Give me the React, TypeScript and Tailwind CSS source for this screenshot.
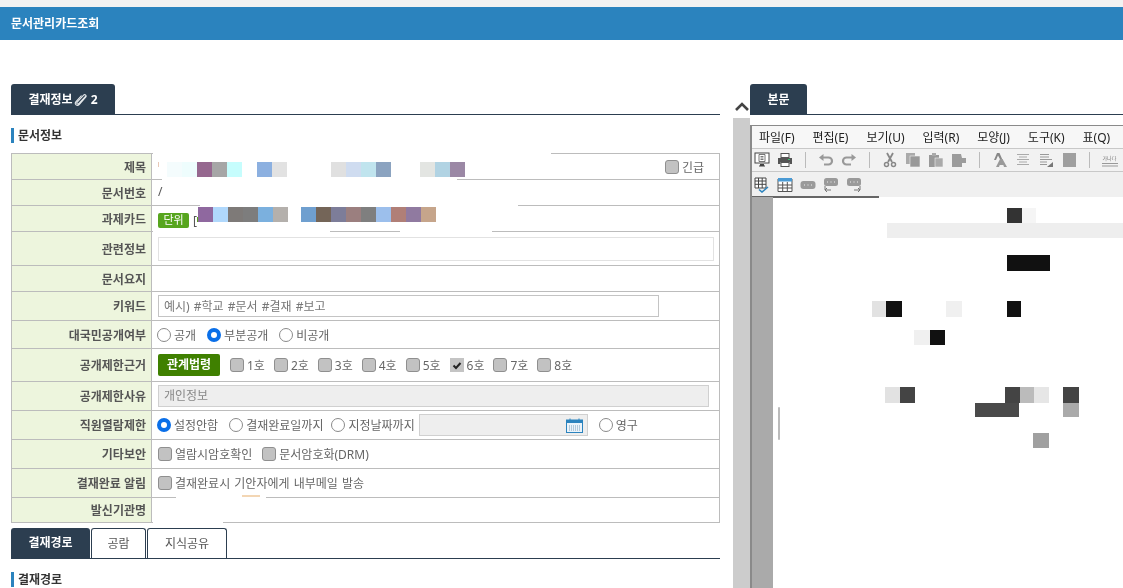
import type { ReactNode } from 'react';

const font = { fontFamily: '"Noto Sans", "Noto Sans CJK KR", sans-serif' };

// 가려진 부분 (모자이크)
const Block = ({ c, w = 'w-[15px]' }: { c: string; w?: string }) => <span className={`block h-full shrink-0 ${w} ${c}`} />;

const Mosaic = ({ className, colors }: { className: string; colors: string[] }) => (
  <div className={`absolute flex blur-[0.5px] ${className}`}>
    {colors.map((c, i) => (
      <Block key={i} c={c} />
    ))}
  </div>
);

const Radio = ({ on }: { on?: boolean }) =>
  on ? (
    <span className="block w-[14px] h-[14px] shrink-0 rounded-full border-[4px] border-[#0a6fe8] bg-white" />
  ) : (
    <span className="block w-[14px] h-[14px] shrink-0 rounded-full border border-[#8a8a8a] bg-white" />
  );

const RadioItem = ({ on, label, className = '' }: { on?: boolean; label: string; className?: string }) => (
  <span className={`flex items-center gap-[3px] ${className}`}>
    <Radio on={on} />
    <span className="pt-[2px]">{label}</span>
  </span>
);

const Check = ({ on, label, className = '' }: { on?: boolean; label: string; className?: string }) => (
  <span className={`flex items-center gap-[3px] ${className}`}>
    {on ? (
      <span className="flex items-center justify-center w-[14px] h-[14px] bg-[#c4c4c4]">
        <svg width="10" height="9" viewBox="0 0 10 9">
          <path d="M1.5 4.5 L4 7 L8.5 2" stroke="#222" strokeWidth="2" fill="none" />
        </svg>
      </span>
    ) : (
      <span className="block w-[14px] h-[14px] rounded-[3px] border border-[#8f8f8f] bg-[#c2c2c2]" />
    )}
    <span className="pt-[2px]">{label}</span>
  </span>
);

const Row = ({ label, h, children, last }: { label: string; h: string; children?: ReactNode; last?: boolean }) => (
  <div className={`flex ${h} ${last ? '' : 'border-b border-[#bcbcbc]'}`}>
    <div className="w-[140px] shrink-0 border-r border-[#bcbcbc] bg-[#edf5dd] flex items-center justify-end pr-[5px] pt-[2px] font-bold text-[#555]">
      {label}
    </div>
    <div className="flex-1 flex items-center pl-[6px] text-[#666] relative">{children}</div>
  </div>
);

const Heading = ({ text, className = '' }: { text: string; className?: string }) => (
  <div className={`flex items-center gap-[4px] h-[15px] ${className}`}>
    <span className="block w-[3px] h-[15px] bg-[#2b83be]" />
    <span className="text-[12px] font-bold text-[#333]">{text}</span>
  </div>
);

const Sep = () => <span className="block w-px h-[16px] bg-[#bbb] mx-[5px]" />;

const Tool = ({ children }: { children: ReactNode }) => (
  <svg width="16" height="16" viewBox="0 0 16 16" className="shrink-0">
    {children}
  </svg>
);

const numbers = ['1호', '2호', '3호', '4호', '5호', '6호', '7호', '8호'];
const menus = ['파일(F)', '편집(E)', '보기(U)', '입력(R)', '모양(J)', '도구(K)', '표(Q)'];

export default function App() {
  return (
    <div className="w-[1123px] h-[588px] overflow-hidden bg-white text-[12px] relative blur-[0.3px]" style={font}>
      <div className="h-[7px] bg-[#f2f2f2]" />
      <div className="h-[33px] bg-[#2b83be] flex items-center pl-[11px] text-[12px] font-bold text-white">문서관리카드조회</div>

      <div className="flex pt-[44px]">
        {/* 왼쪽 */}
        <div className="w-[709px] ml-[11px] shrink-0">
          <div className="h-[31px] border-b border-[#2c3e50]">
            <div className="w-[104px] h-[30px] pt-[2px] bg-[#2c3e50] rounded-t-[3px] flex items-center justify-center gap-px text-white font-bold">
              <span>결재정보</span>
              <svg width="14" height="14" viewBox="0 0 14 14" fill="none" stroke="#e4e7ea" strokeWidth="1.1">
                <path d="M12 3 L5 10.5 C3.8 11.8 2 10.6 3.2 9 L9.6 2.2 C11 0.9 13 2.6 11.7 4.2 L5.2 11.6 C3 13.8 0 11 2 8.7 L7.5 2.5" />
              </svg>
              <span className="ml-[2px]">2</span>
            </div>
          </div>
          <Heading text="문서정보" className="mt-[13px]" />

          <div className="mt-[10px] border border-[#bcbcbc] relative">
            <Row label="제목" h="h-[26px]">
              <span className="block w-px h-[5px] bg-[#e8c9b8] -mt-[5px]" />
              <span className="ml-auto mr-[15px] flex items-center">
                <Check label="긴급" />
              </span>
            </Row>
            <Row label="문서번호" h="h-[26px]">
              <span className="text-[#555] -mt-[2px]">/</span>
            </Row>
            <Row label="과제카드" h="h-[26px]">
              <span className="mt-[4px] h-[15px] w-[31px] rounded-[2px] bg-[#57a51e] text-white text-[11px] flex items-center justify-center">단위</span>
              <span className="ml-[4px] mt-[4px] text-[#555]">[</span>
              <span className="mt-[2px] block w-[2px] h-[5px] bg-[#57a51e]" />
            </Row>
            <Row label="관련정보" h="h-[34px]">
              <div className="w-[556px] h-[24px] border border-[#e2e2e2] bg-white" />
            </Row>
            <Row label="문서요지" h="h-[26px]" />
            <Row label="키워드" h="h-[29px]">
              <div className="w-[501px] h-[22px] border border-[#c4c4c4] bg-white flex items-center pl-[5px] pt-[2px] text-[#777] [word-spacing:1px]">예시) #학교 #문서 #결재 #보고</div>
            </Row>
            <Row label="대국민공개여부" h="h-[28px]">
              <RadioItem label="공개" className="-ml-px" />
              <RadioItem on label="부분공개" className="ml-[11px]" />
              <RadioItem label="비공개" className="ml-[11px]" />
            </Row>
            <Row label="공개제한근거" h="h-[33px]">
              <span className="w-[62px] h-[22px] rounded-[2px] bg-[#3f8000] text-white font-bold flex items-center justify-center">관계법령</span>
              <span className="flex gap-[9px] ml-[10px]">
                {numbers.map((n) => (
                  <Check key={n} label={n} on={n === '6호'} />
                ))}
              </span>
            </Row>
            <Row label="공개제한사유" h="h-[29px]">
              <div className="w-[551px] h-[22px] border border-[#d0d0d0] bg-[#eeeeee] flex items-center pl-[5px] text-[#888]">개인정보</div>
            </Row>
            <Row label="직원열람제한" h="h-[29px]">
              <RadioItem on label="설정안함" className="-ml-px" />
              <RadioItem label="결재완료일까지" className="ml-[11px]" />
              <RadioItem label="지정날짜까지" className="ml-[8px]" />
              <div className="ml-[4px] w-[169px] h-[22px] border border-[#d0d0d0] bg-[#eeeeee] flex items-center justify-end pr-[4px]">
                <svg width="17" height="15" viewBox="0 0 17 15">
                  <rect x="0.5" y="2" width="16" height="12.5" fill="#eaf3fa" stroke="#2b83be" />
                  <rect x="0.5" y="2" width="16" height="3" fill="#2b83be" />
                  <path d="M4 0.5V3M13 0.5V3" stroke="#2b83be" />
                  <path d="M3 8H14M3 10H14M3 12H14" stroke="#7a9fbb" strokeDasharray="1 1" />
                </svg>
              </div>
              <RadioItem label="영구" className="ml-[11px]" />
            </Row>
            <Row label="기타보안" h="h-[29px]">
              <Check label="열람시암호확인" />
              <Check label="문서암호화(DRM)" className="ml-[10px]" />
            </Row>
            <Row label="결재완료 알림" h="h-[29px]">
              <Check label="결재완료시 기안자에게 내부메일 발송" className="[word-spacing:1px]" />
            </Row>
            <Row label="발신기관명" h="h-[24px]" last />

            {/* 가려진 부분 */}
            <div className="absolute left-[141px] -top-[1px] w-[398px] h-[2px] bg-white" />
            <div className="absolute left-[150px] top-[24px] w-[295px] h-[3px] bg-white" />
            <div className="absolute left-[188px] top-[50px] w-[318px] h-[3px] bg-white" />
            <div className="absolute left-[141px] top-[76px] w-[177px] h-[3px] bg-white" />
            <div className="absolute left-[388px] top-[76px] w-[92px] h-[3px] bg-white" />
            <div className="absolute left-[164px] top-[342px] w-[90px] h-[3px] bg-white" />
            <div className="absolute left-[230px] top-[341px] w-[18px] h-[2px] bg-[#f3d6b4] blur-[0.5px]" />
            <div className="absolute left-[141px] top-[366px] w-[70px] h-[3px] bg-white" />
            <Mosaic className="left-[155px] top-[8px] h-[15px]" colors={['bg-[#f4fcfd]', 'bg-[#eefdfd]', 'bg-[#96688f]', 'bg-[#a6a6a6]', 'bg-[#c6fdfd]']} />
            <Mosaic className="left-[245px] top-[8px] h-[15px]" colors={['bg-[#8cb0e0]', 'bg-[#e2e2e2]']} />
            <Mosaic className="left-[319px] top-[8px] h-[15px]" colors={['bg-[#e0e0e0]', 'bg-[#cfdcf0]', 'bg-[#c0e4ee]', 'bg-[#8ba3c0]']} />
            <Mosaic className="left-[408px] top-[8px] h-[15px]" colors={['bg-[#e3e5e2]', 'bg-[#b1d3e3]', 'bg-[#9b88a5]']} />
            <Mosaic className="left-[186px] top-[53px] h-[15px]" colors={['bg-[#8f689f]', 'bg-[#b0d8fc]', 'bg-[#7e7a78]', 'bg-[#7d7d7d]', 'bg-[#7bb0de]', 'bg-[#b4b0ac]']} />
            <Mosaic className="left-[289px] top-[53px] h-[15px]" colors={['bg-[#6f9fcf]', 'bg-[#746558]', 'bg-[#7d7d99]', 'bg-[#9b7f7f]', 'bg-[#7f7f7f]', 'bg-[#9cbfec]', 'bg-[#b07f77]', 'bg-[#907aa0]', 'bg-[#c6a58b]']} />
          </div>

          <div className="mt-[5px] h-[31px] border-b border-[#2c3e50] flex items-end">
            <div className="w-[79px] h-[30px] bg-[#2c3e50] rounded-t-[3px] flex items-center justify-center text-white font-bold">결재경로</div>
            <div className="ml-px w-[55px] h-[30px] border border-b-0 border-[#2c3e50] rounded-t-[3px] flex items-center justify-center text-[#555]">공람</div>
            <div className="ml-px w-[80px] h-[30px] border border-b-0 border-[#2c3e50] rounded-t-[3px] flex items-center justify-center text-[#555]">지식공유</div>
          </div>
          <Heading text="결재경로" className="mt-[13px]" />
        </div>

        {/* 스크롤 */}
        <div className="ml-[13px] w-[17px] shrink-0 pt-[12px] flex flex-col">
          <div className="h-[22px] flex items-center justify-center pb-[2px]">
            <svg width="14" height="9" viewBox="0 0 14 9" fill="none" stroke="#444" strokeWidth="2.6">
              <path d="M1 8 L7 2 L13 8" />
            </svg>
          </div>
          <div className="h-[500px] bg-[#cccccc]" />
        </div>

        {/* 본문 */}
        <div className="flex-1 min-w-0">
          <div className="h-[31px] border-b border-[#2c3e50]">
            <div className="w-[57px] h-[30px] pt-[2px] bg-[#2c3e50] rounded-t-[3px] flex items-center justify-center text-white font-bold">본문</div>
          </div>
          <div className="mt-[10px] h-[500px] border-t border-l-2 border-[#8a8a8a] flex flex-col">
            <div className="h-[23px] pt-[2px] bg-[#f7f7f7] border-b border-[#c8c8c8] flex items-center gap-[18px] pl-[7px] text-[#222] whitespace-nowrap">
              {menus.map((m) => (
                <span key={m}>{m}</span>
              ))}
            </div>
            <div className="h-[23px] bg-[#f2f2f2] border-b border-[#c8c8c8] flex items-center gap-[7px] pl-[2px] overflow-hidden">
              <Tool>
                <rect x="1" y="1" width="14" height="10" fill="#fff" stroke="#444" />
                <path d="M5 2.5h6v7H5zM6.5 4.5h3M6.5 6h3M6.5 7.5h3" stroke="#555" fill="none" strokeWidth="0.8" />
                <path d="M6 12h4v1.5H11v1H5v-1h1z" fill="#444" />
              </Tool>
              <Tool>
                <rect x="4" y="1.5" width="8" height="4" fill="#fff" stroke="#555" />
                <path d="M1 6h14v6h-2.5v-2h-9v2H1z" fill="#555" />
                <rect x="4" y="10.5" width="8" height="4" fill="#fff" stroke="#555" />
                <rect x="11" y="7" width="2" height="1" fill="#3fbf6f" />
              </Tool>
              <Sep />
              <Tool>
                <path d="M4 5.5h6.5a3.5 3.5 0 0 1 0 7H6" fill="none" stroke="#999" strokeWidth="2.2" />
                <path d="M1 5.5L5.5 2v7z" fill="#999" />
              </Tool>
              <Tool>
                <path d="M12 5.5H5.5a3.5 3.5 0 0 0 0 7H10" fill="none" stroke="#999" strokeWidth="2.2" />
                <path d="M15 5.5L10.5 2v7z" fill="#999" />
              </Tool>
              <Sep />
              <Tool>
                <path d="M5 1l5 9M11 1L6 10" stroke="#888" strokeWidth="1.8" />
                <circle cx="4.5" cy="12.5" r="2" fill="none" stroke="#888" strokeWidth="1.5" />
                <circle cx="11.5" cy="12.5" r="2" fill="none" stroke="#888" strokeWidth="1.5" />
              </Tool>
              <Tool>
                <rect x="1" y="1" width="9" height="11" fill="#aaa" />
                <rect x="5" y="4" width="10" height="11" fill="#999" stroke="#f2f2f2" strokeWidth="0.6" />
              </Tool>
              <Tool>
                <rect x="1" y="3" width="10" height="12" fill="#999" />
                <rect x="4" y="1" width="4" height="3" fill="#aaa" />
                <rect x="7" y="6" width="8" height="9" fill="#aaa" stroke="#f2f2f2" strokeWidth="0.6" />
              </Tool>
              <Tool>
                <path d="M1 2h9l1 4h4v5h-4v4H1z" fill="#9c9c9c" />
              </Tool>
              <Sep />
              <Tool>
                <path d="M5 1h2.5L11 9H9L6 3.5 4 8H2z" fill="#888" />
                <path d="M8 7h2.5L15 15h-3l-.7-2H7.7L7 15H4z" fill="#9a9a9a" />
              </Tool>
              <Tool>
                <path d="M2 2.5h12M4 5h8M2 7.5h12M4 10h8M2 12.5h12" stroke="#aaa" />
              </Tool>
              <Tool>
                <path d="M2 2.5h9M2 5h9M2 7.5h12M2 10h7M2 12.5h7" stroke="#999" />
                <path d="M15 15H9l6-5z" fill="#777" />
              </Tool>
              <Tool>
                <rect x="2" y="1" width="13" height="14" fill="#9f9f9f" />
              </Tool>
              <Sep />
              <Tool>
                <text x="0.5" y="8" fontSize="5" fill="#777">가나다</text>
                <path d="M0 11.5h16" stroke="#999" />
                <path d="M0 14h16" stroke="#999" />
              </Tool>
            </div>
            <div className="h-[25px] bg-[#f0f0f0] flex items-center gap-[7px] pl-[2px]">
              <Tool>
                <path d="M1 1h11v10H1zM1 4h11M1 7.3h11M4.5 1v10M8.2 1v10" fill="#fff" stroke="#444" />
                <path d="M5 12.5l3 2.5 6-5" fill="none" stroke="#2b83be" strokeWidth="1.6" />
              </Tool>
              <Tool>
                <path d="M1 2h14v12.5H1zM1 8h14M1 11h14M5.7 5v9.5M10.3 5v9.5" fill="#fff" stroke="#555" />
                <rect x="1" y="1" width="14" height="3.5" fill="#4a9ad4" />
              </Tool>
              <Tool>
                <rect x="0.5" y="4" width="15" height="8" rx="3" fill="#9a9a9a" />
                <path d="M4 8h1M7.5 8h1M11 8h1" stroke="#eee" />
              </Tool>
              <Tool>
                <rect x="1" y="1" width="14" height="8" rx="2.5" fill="#9a9a9a" />
                <path d="M4 5h1M7.5 5h1M11 5h1" stroke="#eee" />
                <path d="M2 9v4h6M4 11l-2 2 2 2" fill="none" stroke="#777" />
              </Tool>
              <Tool>
                <rect x="1" y="1" width="14" height="8" rx="2.5" fill="#9a9a9a" />
                <path d="M4 5h1M7.5 5h1M11 5h1" stroke="#eee" />
                <path d="M14 9v4H8M12 11l2 2-2 2" fill="none" stroke="#777" />
              </Tool>
            </div>
            <div className="flex-1 relative bg-white">
              <div className="absolute -top-px left-0 w-[127px] h-[2px] bg-[#666]" />
              <div className="absolute top-0 left-0 bottom-0 w-[21px] bg-[#aaaaaa]" />
              {/* 문서 본문 모자이크: 좌표 자체가 내용 */}
              <div className="absolute left-[255px] top-[11px] w-[15px] h-[15px] bg-[#333] blur-[0.5px]" />
              <div className="absolute left-[270px] top-[11px] w-[14px] h-[15px] bg-[#f5f5f5] blur-[0.5px]" />
              <div className="absolute left-[135px] top-[26px] w-[240px] h-[15px] bg-[#eeeeee] blur-[0.5px]" />
              <div className="absolute left-[255px] top-[58px] w-[43px] h-[16px] bg-[#111] blur-[0.5px]" />
              <div className="absolute left-[120px] top-[104px] w-[14px] h-[16px] bg-[#e2e2e2] blur-[0.5px]" />
              <div className="absolute left-[134px] top-[104px] w-[16px] h-[16px] bg-[#111] blur-[0.5px]" />
              <div className="absolute left-[194px] top-[104px] w-[16px] h-[16px] bg-[#f0f0f0] blur-[0.5px]" />
              <div className="absolute left-[255px] top-[104px] w-[14px] h-[16px] bg-[#111] blur-[0.5px]" />
              <div className="absolute left-[162px] top-[133px] w-[16px] h-[15px] bg-[#f0f0f0] blur-[0.5px]" />
              <div className="absolute left-[178px] top-[133px] w-[15px] h-[15px] bg-[#111] blur-[0.5px]" />
              <div className="absolute left-[133px] top-[190px] w-[15px] h-[16px] bg-[#e2e2e2] blur-[0.5px]" />
              <div className="absolute left-[148px] top-[190px] w-[15px] h-[16px] bg-[#444] blur-[0.5px]" />
              <div className="absolute left-[253px] top-[190px] w-[15px] h-[16px] bg-[#444] blur-[0.5px]" />
              <div className="absolute left-[268px] top-[190px] w-[14px] h-[16px] bg-[#bbb] blur-[0.5px]" />
              <div className="absolute left-[282px] top-[190px] w-[15px] h-[16px] bg-[#e6e6e6] blur-[0.5px]" />
              <div className="absolute left-[223px] top-[206px] w-[44px] h-[14px] bg-[#4a4a4a] blur-[0.5px]" />
              <div className="absolute left-[311px] top-[190px] w-[16px] h-[16px] bg-[#444] blur-[0.5px]" />
              <div className="absolute left-[311px] top-[206px] w-[16px] h-[14px] bg-[#aaa] blur-[0.5px]" />
              <div className="absolute left-[281px] top-[236px] w-[16px] h-[15px] bg-[#a0a0a0] blur-[0.5px]" />
              <div className="absolute left-[26px] top-[210px] w-[2px] h-[33px] rounded-full bg-[#bbb]" />
            </div>
          </div>
        </div>
      </div>
    </div>
  );
}
